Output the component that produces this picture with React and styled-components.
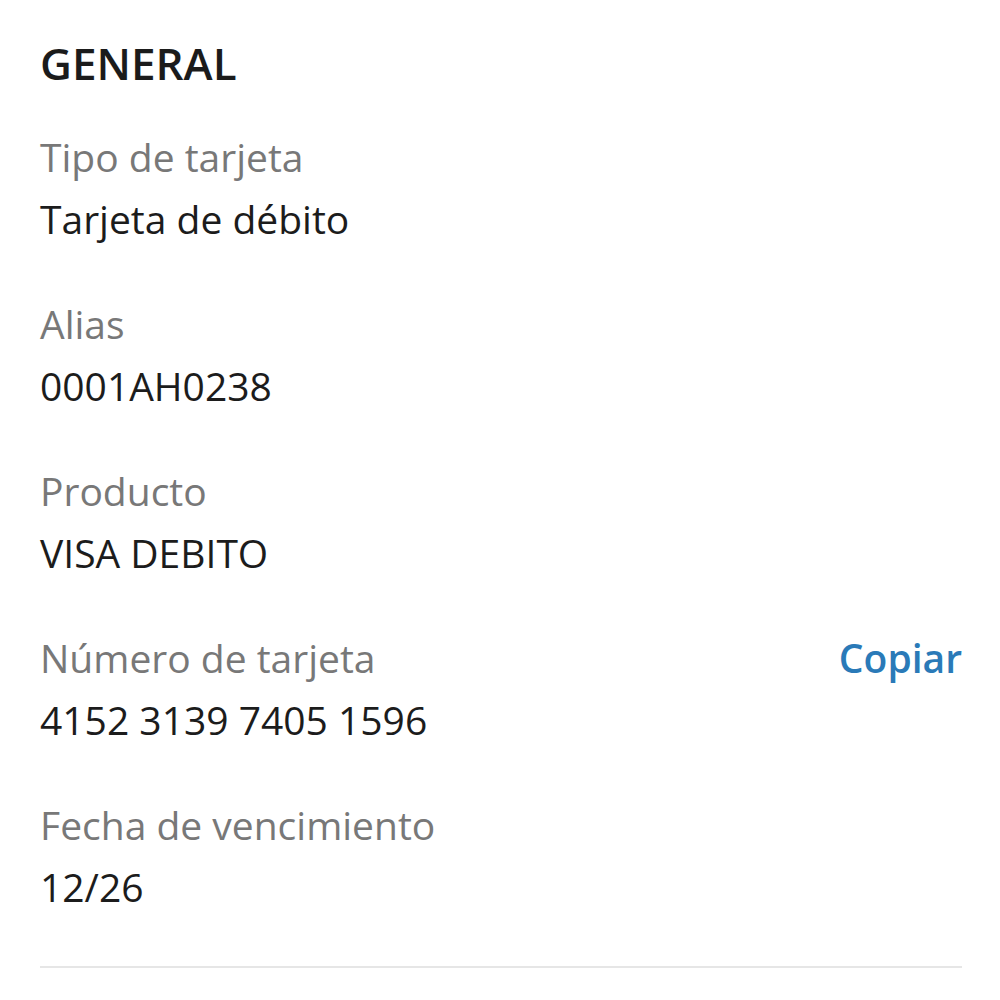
import React from 'react';
import styled, { createGlobalStyle } from 'styled-components';

const GlobalStyle = createGlobalStyle`
  html, body {
    margin: 0;
    padding: 0;
    background: #ffffff;
  }
  body {
    font-family: 'Open Sans', 'Noto Sans', sans-serif;
    -webkit-font-smoothing: antialiased;
  }
`;

const Page = styled.div`
  width: 1000px;
  height: 1000px;
  box-sizing: border-box;
  padding: 35px 38px 0 40px;
  background: #ffffff;
`;

const Heading = styled.h2`
  margin: 0;
  font-size: 44px;
  line-height: 56px;
  font-weight: 600;
  color: #1b1b1b;
`;

const List = styled.div`
  display: flex;
  flex-direction: column;
  margin-top: 40px;
`;

const Item = styled.div`
  display: flex;
  flex-direction: column;
  height: 167px;
`;

const LabelRow = styled.div`
  display: flex;
  align-items: baseline;
  justify-content: space-between;
`;

const Label = styled.span`
  font-size: 39px;
  line-height: 52px;
  color: #787878;
`;

const Value = styled.span`
  margin-top: 10px;
  font-size: 39px;
  line-height: 52px;
  color: #1c1c1c;
`;

const CopyButton = styled.button`
  border: none;
  background: none;
  padding: 0;
  font-family: inherit;
  font-size: 39px;
  line-height: 52px;
  font-weight: 600;
  color: #2a7ab8;
  cursor: pointer;
`;

const Divider = styled.hr`
  margin: 0;
  border: none;
  height: 2px;
  background: #e6e6e6;
`;

const fields = [
  { label: 'Tipo de tarjeta', value: 'Tarjeta de débito' },
  { label: 'Alias', value: '0001AH0238' },
  { label: 'Producto', value: 'VISA DEBITO' },
  { label: 'Número de tarjeta', value: '4152 3139 7405 1596', copy: true },
  { label: 'Fecha de vencimiento', value: '12/26' },
];

export default function App() {
  return (
    <Page>
      <GlobalStyle />
      <Heading>GENERAL</Heading>
      <List>
        {fields.map((f) => (
          <Item key={f.label}>
            <LabelRow>
              <Label>{f.label}</Label>
              {f.copy && <CopyButton>Copiar</CopyButton>}
            </LabelRow>
            <Value>{f.value}</Value>
          </Item>
        ))}
      </List>
      <Divider />
    </Page>
  );
}
